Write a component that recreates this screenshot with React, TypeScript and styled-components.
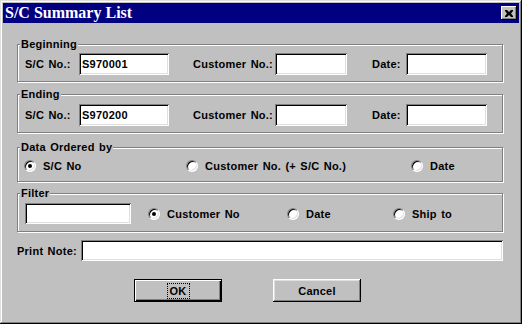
import styled, { createGlobalStyle } from "styled-components";

const GlobalStyle = createGlobalStyle`
  html, body {
    margin: 0;
    padding: 0;
    background: #c0c0c0;
  }
  body {
    font-family: "Liberation Sans", Arial, sans-serif;
    font-size: 11px;
    font-weight: bold;
    letter-spacing: 0.25px;
    word-spacing: 1px;
    color: #000;
  }
`;

const Window = styled.div`
  box-sizing: border-box;
  width: 522px;
  height: 324px;
  padding: 3px;
  background: #c0c0c0;
  box-shadow: inset -1px -1px 0 #000, inset 1px 1px 0 #dfdfdf,
    inset -2px -2px 0 #808080, inset 2px 2px 0 #fff;
  display: flex;
  flex-direction: column;
`;

const TitleBar = styled.div`
  height: 20px;
  background: #000080;
  color: #fff;
  display: flex;
  align-items: center;
  justify-content: space-between;
  padding: 0 2px;
`;

const Title = styled.span`
  font-family: "Liberation Serif", "Times New Roman", serif;
  font-size: 16px;
  font-weight: bold;
  letter-spacing: 0;
  word-spacing: 0;
`;

const CloseButton = styled.div`
  width: 16px;
  height: 14px;
  background: #c0c0c0;
  box-shadow: inset -1px -1px 0 #000, inset 1px 1px 0 #fff,
    inset -2px -2px 0 #808080;
  display: flex;
  align-items: center;
  justify-content: center;
`;

const Body = styled.div`
  display: flex;
  flex-direction: column;
  padding: 0 16px 0 14px;
`;

const Group = styled.div<{ $top: number; $height: number }>`
  box-sizing: border-box;
  margin-top: ${(p) => p.$top}px;
  height: ${(p) => p.$height}px;
  border: 1px solid #808080;
  box-shadow: inset 1px 1px 0 #fff, 1px 1px 0 #fff;
  display: flex;
  flex-direction: column;
`;

const Caption = styled.span`
  align-self: flex-start;
  margin: -7px 0 0 2px;
  padding: 0 1px;
  line-height: 13px;
  background: #c0c0c0;
`;

const Row = styled.div<{ $top?: number; $left?: number }>`
  display: flex;
  align-items: center;
  margin-top: ${(p) => p.$top ?? 0}px;
  padding-left: ${(p) => p.$left ?? 0}px;
`;

const Label = styled.span<{ $width?: number; $ml?: number }>`
  width: ${(p) => (p.$width ? `${p.$width}px` : "auto")};
  margin-left: ${(p) => p.$ml ?? 0}px;
  white-space: nowrap;
`;

const Field = styled.div<{ $width?: number; $height?: number }>`
  box-sizing: border-box;
  width: ${(p) => (p.$width ? `${p.$width}px` : "auto")};
  flex: ${(p) => (p.$width ? "none" : "1")};
  height: ${(p) => p.$height ?? 22}px;
  background: #fff;
  padding: 0 3px;
  display: flex;
  align-items: center;
  box-shadow: inset 1px 1px 0 #808080, inset -1px -1px 0 #fff,
    inset 2px 2px 0 #000, inset -2px -2px 0 #dfdfdf;
`;

const RadioOption = styled.label<{ $ml?: number; $width?: number }>`
  display: flex;
  align-items: center;
  gap: 7px;
  width: ${(p) => (p.$width ? `${p.$width}px` : "auto")};
  margin-left: ${(p) => p.$ml ?? 0}px;
  white-space: nowrap;
`;

const RadioDot = styled.span<{ $checked?: boolean }>`
  box-sizing: border-box;
  flex: none;
  width: 12px;
  height: 12px;
  border-radius: 50%;
  background: #fff;
  border: 1px solid;
  border-color: #808080 #fff #fff #808080;
  box-shadow: inset 1px 1px 0 #000, inset -1px -1px 0 #dfdfdf;
  display: flex;
  align-items: center;
  justify-content: center;
  &::after {
    content: "";
    width: 4px;
    height: 4px;
    border-radius: 50%;
    background: ${(p) => (p.$checked ? "#000" : "transparent")};
  }
`;

const ButtonRow = styled.div`
  display: flex;
  gap: 51px;
  margin-top: 18px;
  padding-left: 117px;
`;

const Button = styled.div<{ $default?: boolean }>`
  box-sizing: border-box;
  width: 88px;
  height: 23px;
  display: flex;
  align-items: center;
  justify-content: center;
  background: #c0c0c0;
  border: ${(p) => (p.$default ? "1px solid #000" : "none")};
  box-shadow: ${(p) =>
    p.$default
      ? "inset 1px 1px 0 #fff, inset -1px -1px 0 #000, inset -2px -2px 0 #808080"
      : "inset -1px -1px 0 #000, inset 1px 1px 0 #fff, inset -2px -2px 0 #808080, inset 2px 2px 0 #dfdfdf"};
`;

const FocusText = styled.span`
  outline: 1px dotted #000;
  outline-offset: 1px;
  padding: 0 1px;
  line-height: 12px;
`;

type RadioProps = { text: string; checked?: boolean; ml?: number; width?: number };

const Radio = ({ text, checked, ml, width }: RadioProps) => (
  <RadioOption $ml={ml} $width={width}>
    <RadioDot $checked={checked} />
    {text}
  </RadioOption>
);

const RangeRow = ({ sc, top }: { sc: string; top: number }) => (
  <Row $top={top} $left={7}>
    <Label $width={54}>S/C No.:</Label>
    <Field $width={90}>{sc}</Field>
    <Label $width={82} $ml={24}>
      Customer No.:
    </Label>
    <Field $width={72} />
    <Label $width={34} $ml={25}>
      Date:
    </Label>
    <Field $width={81} />
  </Row>
);

export default function App() {
  return (
    <>
      <GlobalStyle />
      <Window>
        <TitleBar>
          <Title>S/C Summary List</Title>
          <CloseButton>
            <svg width="8" height="7" viewBox="0 0 8 7">
              <path d="M0 0h2l2 2 2-2h2v1L6 3.5 8 6v1H6L4 5 2 7H0V6l2-2.5L0 1z" fill="#000" />
            </svg>
          </CloseButton>
        </TitleBar>
        <Body>
          <Group $top={21} $height={38}>
            <Caption>Beginning</Caption>
            <RangeRow sc="S970001" top={2} />
          </Group>
          <Group $top={12} $height={39}>
            <Caption>Ending</Caption>
            <RangeRow sc="S970200" top={3} />
          </Group>
          <Group $top={14} $height={35}>
            <Caption>Data Ordered by</Caption>
            <Row $top={6} $left={6}>
              <Radio text="S/C No" checked width={162} />
              <Radio text="Customer No. (+ S/C No.)" width={225} />
              <Radio text="Date" />
            </Row>
          </Group>
          <Group $top={11} $height={39}>
            <Caption>Filter</Caption>
            <Row $top={3} $left={7}>
              <Field $width={106} $height={21} />
              <Radio text="Customer No" checked ml={17} width={139} />
              <Radio text="Date" width={106} />
              <Radio text="Ship to" />
            </Row>
          </Group>
          <Row $top={8}>
            <Label $width={64}>Print Note:</Label>
            <Field $height={21} />
          </Row>
          <ButtonRow>
            <Button $default>
              <FocusText>OK</FocusText>
            </Button>
            <Button>Cancel</Button>
          </ButtonRow>
        </Body>
      </Window>
    </>
  );
}
